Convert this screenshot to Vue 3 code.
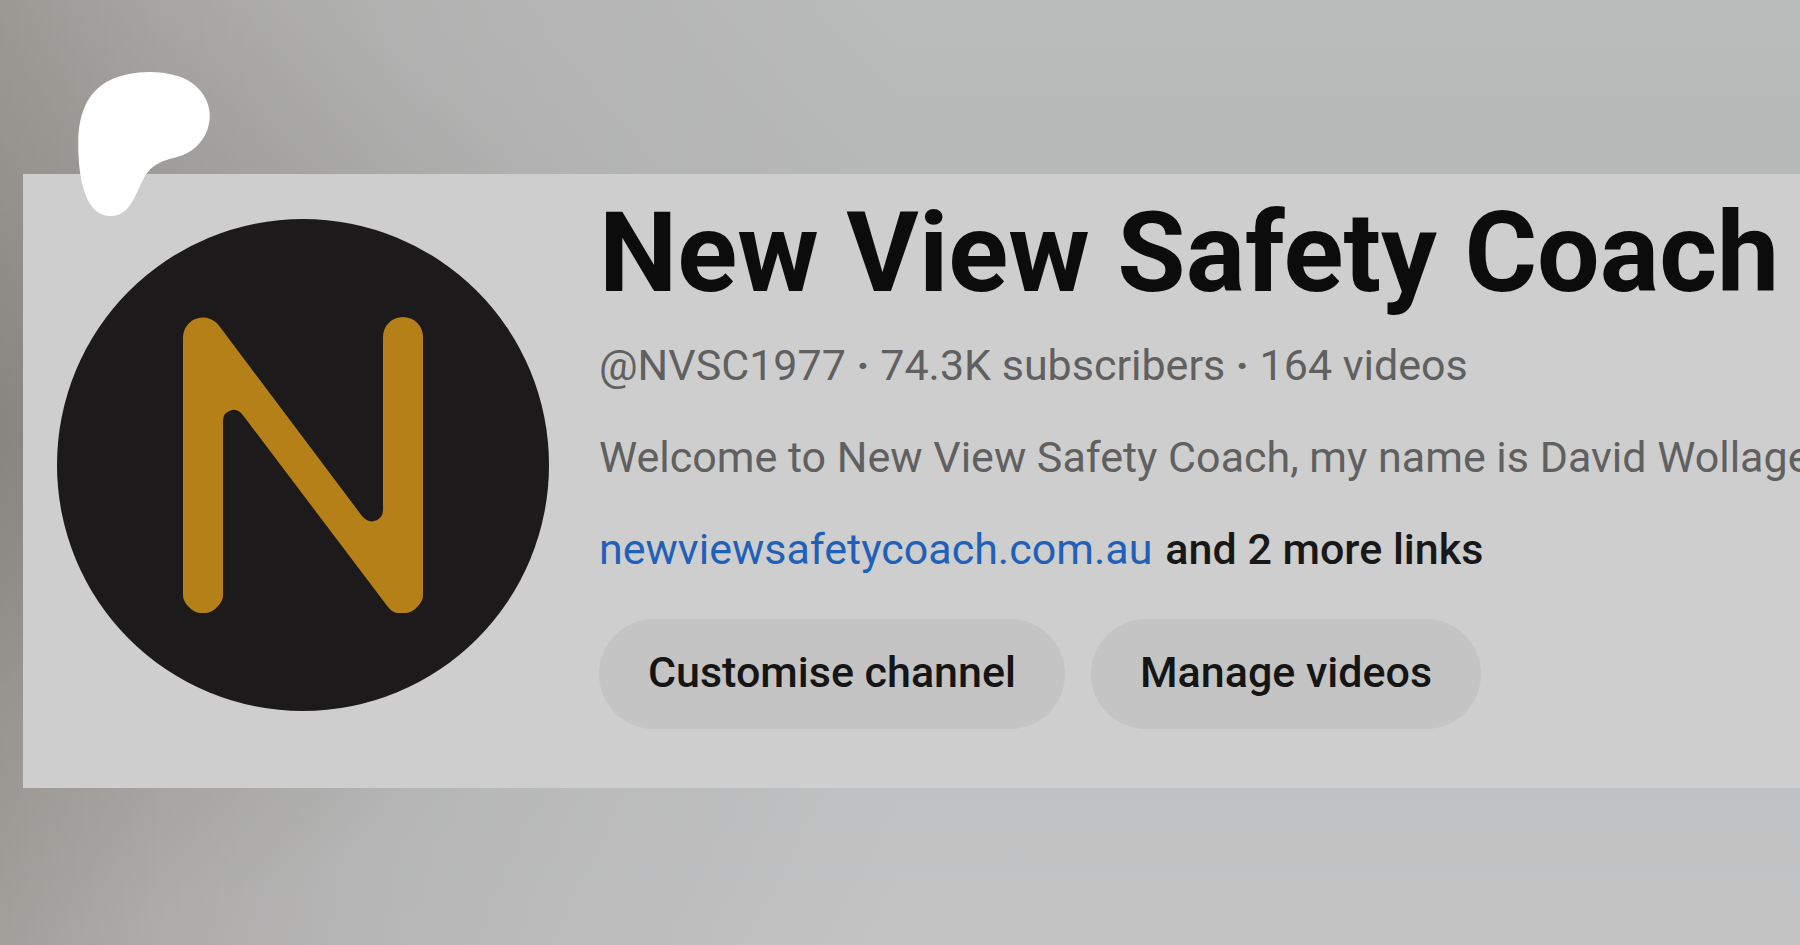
<script setup>
const stats = ['@NVSC1977', '74.3K subscribers', '164 videos']
const actions = ['Customise channel', 'Manage videos']
</script>

<template>
  <main class="page">
    <svg class="brand" viewBox="47 0 986 1080" role="img" aria-label="Patreon">
      <path
        fill="#fff"
        d="M1033.05 324.45c-.19-137.9-107.59-250.92-233.6-291.7-156.48-50.64-362.86-43.3-512.28 27.2C106.07 145.41 49.18 332.61 47.06 519.31c-1.74 153.5 13.58 557.79 241.62 560.67 169.44 2.15 194.67-216.18 273.07-321.33 55.78-74.81 127.6-95.94 216.01-117.82C929.71 603.22 1033.27 483.3 1033.05 324.45z"
      />
    </svg>

    <section class="card">
      <svg class="avatar" viewBox="0 0 492 492" role="img" aria-label="Channel avatar">
        <circle cx="246" cy="246" r="246" fill="#1d1a1b" />
        <path
          fill="#b58018"
          d="M126 118 A20 20 0 0 1 163 108 L305 297 Q311 304 317 302 Q326 300 326 291 V118 A20 20 0 0 1 366 118 V376 Q366 381 362 386 Q355 394 349 394 H341 Q336 394 331 388 L185 195 Q180 190 175 191 Q166 193 166 202 V376 Q166 381 162 386 Q155 394 149 394 H143 Q137 394 130 386 Q126 381 126 376 Z"
        />
      </svg>

      <div class="info">
        <h1 class="title">New View Safety Coach</h1>
        <p class="line">
          <template v-for="(stat, i) in stats" :key="stat"><span v-if="i" class="dot"> · </span>{{ stat }}</template>
        </p>
        <p class="line">Welcome to New View Safety Coach, my name is David Wollage</p>
        <p class="line links">
          <a href="#site">newviewsafetycoach.com.au</a>
          <button type="button" class="more">and 2 more links</button>
        </p>
        <div class="actions">
          <button v-for="label in actions" :key="label" type="button" class="pill">{{ label }}</button>
        </div>
      </div>
    </section>
  </main>
</template>

<style>
body {
  margin: 0;
}
</style>

<style scoped>
.page {
  position: relative;
  box-sizing: border-box;
  min-height: 100vh;
  padding: 174px 0 0 23px;
  overflow: hidden;
  font-family: Roboto, "Liberation Sans", sans-serif;
  background:
    radial-gradient(ellipse 700px 500px at -40px 440px, rgba(112, 108, 100, 0.5), rgba(130, 126, 120, 0.26) 55%, rgba(150, 148, 144, 0) 100%),
    linear-gradient(90deg, rgba(130, 122, 114, 0.5), rgba(142, 138, 134, 0.4) 160px, rgba(156, 154, 152, 0.28) 400px, rgba(180, 181, 182, 0) 900px),
    linear-gradient(180deg, #babbbb 0, #b7b8b8 174px, #c0c1c2 788px, #c3c3c4 100%);
}

.brand {
  position: absolute;
  top: 72px;
  left: 78px;
  width: 132px;
  height: 144px;
}

.card {
  display: flex;
  align-items: flex-start;
  gap: 50px;
  padding: 14px 0 59px 34px;
  background: #cecece;
}

.avatar {
  flex: none;
  width: 492px;
  height: 492px;
  margin-top: 31px;
}

.info {
  flex: 1;
  min-width: 0;
  overflow: hidden;
}

.title {
  margin: 0;
  font-size: 111px;
  font-weight: 700;
  line-height: 131px;
  color: #0c0c0c;
  white-space: nowrap;
}

.line {
  margin: 0;
  font-size: 43px;
  line-height: 92px;
  color: #606060;
  white-space: nowrap;
}

.dot {
  font-weight: 700;
}

.links {
  display: flex;
  gap: 13px;
}

.links a {
  color: #1f60b8;
  text-decoration: none;
}

.more {
  padding: 0;
  border: 0;
  background: none;
  font: inherit;
  font-weight: 500;
  color: #181818;
}

.actions {
  display: flex;
  gap: 26px;
  margin-top: 24px;
}

.pill {
  height: 110px;
  padding: 0 49px 4px;
  border: 0;
  border-radius: 55px;
  background: #c4c4c4;
  font: 500 43px Roboto, "Liberation Sans", sans-serif;
  color: #151515;
}
</style>
